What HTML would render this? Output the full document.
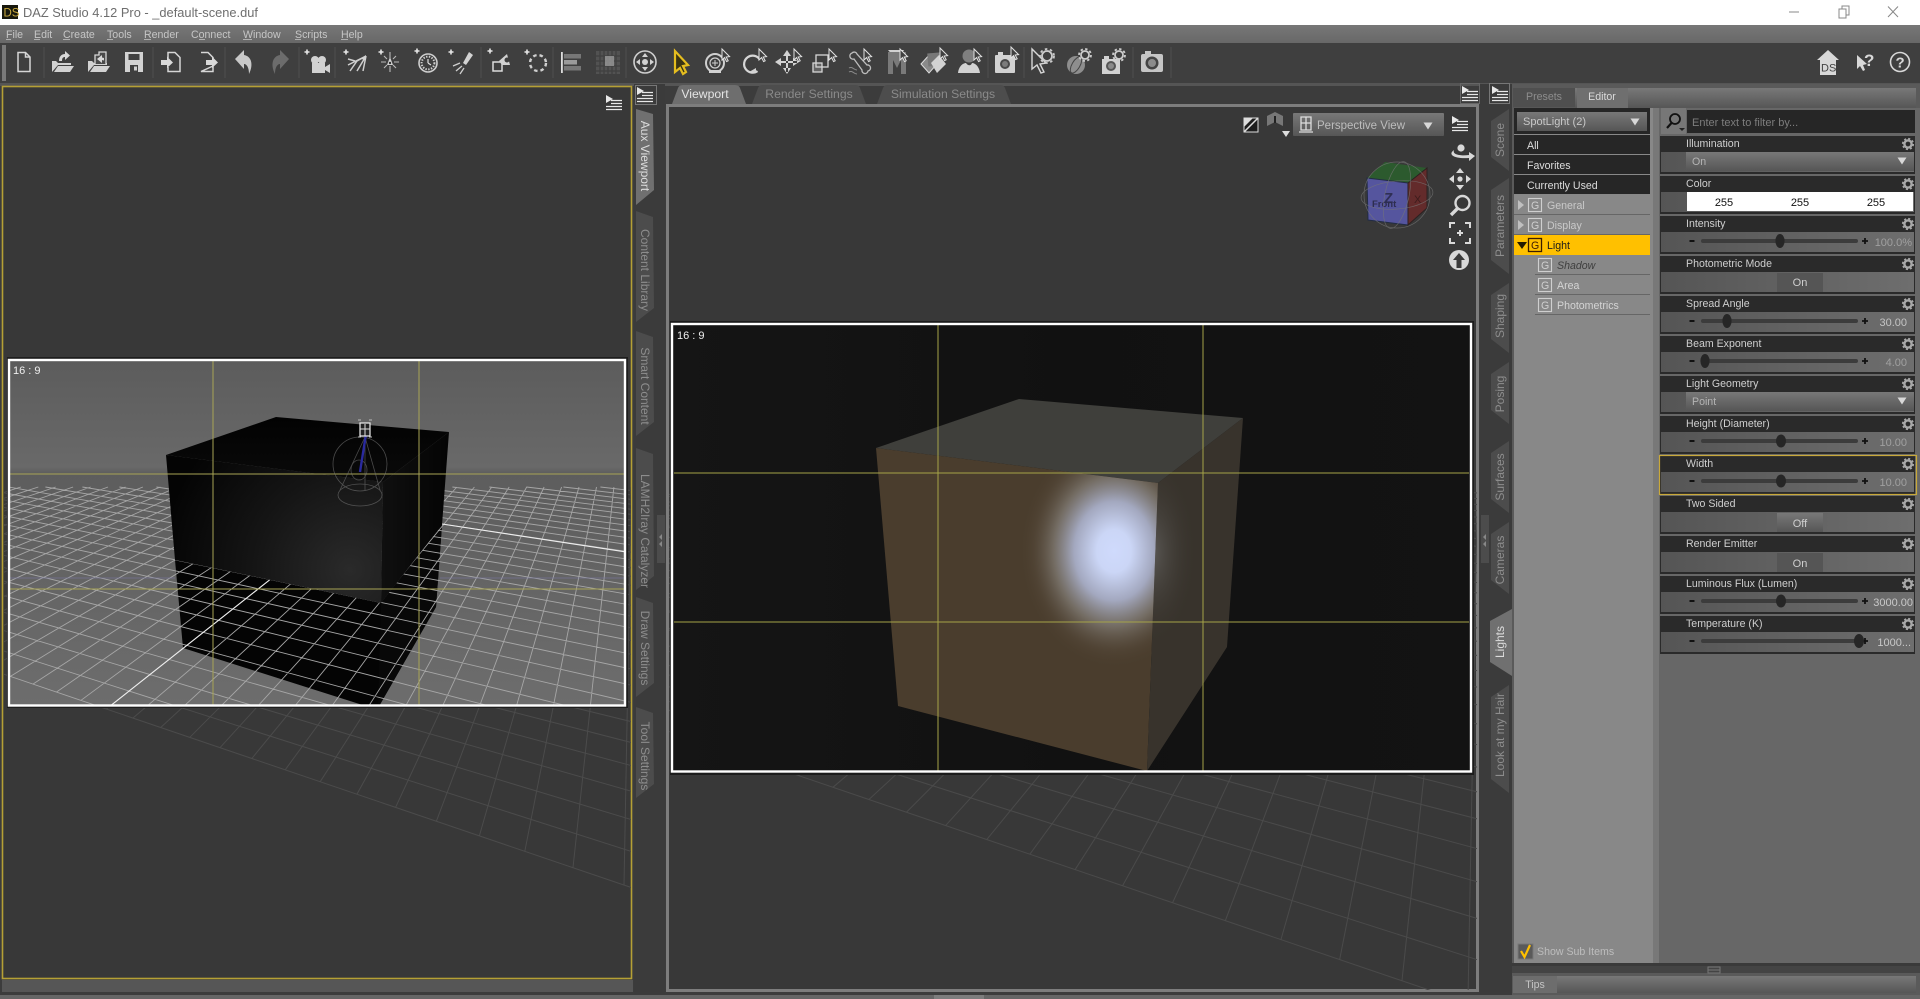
<!DOCTYPE html>
<html><head><meta charset="utf-8"><title>DAZ Studio</title>
<style>
html,body{margin:0;padding:0;background:#3c3c3c;overflow:hidden}
svg{display:block;font-family:"Liberation Sans",sans-serif}
text{font-size:10.6px;fill:#c6c6c6}
.ic{fill:#d2d2d2}
.st{fill:none;stroke:#d6d6d6;stroke-width:1.5}
.sep{stroke:#4f4f4f;stroke-width:1}
.t{fill:#cfcfcf}
.v{font-size:11px;text-anchor:end}
.tb{font-size:12.2px;fill:#8a8a8a;text-anchor:middle}
.vt{font-size:12px;fill:#8d8d8d;text-anchor:middle}
</style></head><body>
<svg width="1920" height="999" viewBox="0 0 1920 999" xmlns="http://www.w3.org/2000/svg">
<defs>
<linearGradient id="menu" x1="0" y1="0" x2="0" y2="1"><stop offset="0" stop-color="#777"/><stop offset="1" stop-color="#686868"/></linearGradient>
<linearGradient id="sel" x1="0" y1="0" x2="0" y2="1"><stop offset="0" stop-color="#787878"/><stop offset="1" stop-color="#565656"/></linearGradient>
<linearGradient id="body" x1="0" y1="0" x2="1" y2="0"><stop offset="0" stop-color="#555"/><stop offset="1" stop-color="#6e6e6e"/></linearGradient>
<linearGradient id="sky" x1="0" y1="0" x2="0" y2="1"><stop offset="0" stop-color="#5c5c5c"/><stop offset=".31" stop-color="#696969"/><stop offset=".33" stop-color="#5d5d5d"/><stop offset="1" stop-color="#6d6d6d"/></linearGradient>
<radialGradient id="lface" cx="350" cy="570" r="190" gradientUnits="userSpaceOnUse"><stop offset="0" stop-color="#2a2a2a"/><stop offset=".5" stop-color="#151515"/><stop offset="1" stop-color="#040404"/></radialGradient>
<linearGradient id="rface" x1="383" y1="0" x2="449" y2="0" gradientUnits="userSpaceOnUse"><stop offset="0" stop-color="#0f0f0f"/><stop offset="1" stop-color="#040404"/></linearGradient>
<linearGradient id="tface" x1="0" y1="417" x2="0" y2="482" gradientUnits="userSpaceOnUse"><stop offset="0" stop-color="#020202"/><stop offset="1" stop-color="#0a0a0a"/></linearGradient>
<linearGradient id="dark" x1="0" y1="0" x2="1" y2="0"><stop offset="0" stop-color="#151515"/><stop offset=".5" stop-color="#111"/><stop offset="1" stop-color="#131313"/></linearGradient>
<radialGradient id="glow"><stop offset="0" stop-color="#cfdafc"/><stop offset=".18" stop-color="#cbd6f6"/><stop offset=".42" stop-color="#a3a8bf"/><stop offset=".64" stop-color="#7d776f" stop-opacity=".8"/><stop offset=".85" stop-color="#5a4e40" stop-opacity=".35"/><stop offset="1" stop-color="#4a3d2d" stop-opacity="0"/></radialGradient>
<radialGradient id="glow2"><stop offset="0" stop-color="#777" stop-opacity=".55"/><stop offset="1" stop-color="#38332c" stop-opacity="0"/></radialGradient>
<clipPath id="cL"><rect x="4" y="88" width="627" height="890"/></clipPath>
<clipPath id="cM"><rect x="669" y="106" width="808" height="884"/></clipPath>
<clipPath id="cB"><rect x="9" y="360" width="616" height="345"/></clipPath>
<clipPath id="cC"><rect x="673" y="324" width="797" height="447"/></clipPath>
<clipPath id="cF"><polygon points="876,448 1158,483 1147,771 898,706"/></clipPath>
<clipPath id="cR"><polygon points="1158,483 1243,418 1227,647 1147,771"/></clipPath>
<g id="gear"><circle r="3.6" fill="none" stroke="#a8a8a8" stroke-width="2.4"/><circle r="5.3" fill="none" stroke="#a8a8a8" stroke-width="1.6" stroke-dasharray="2.1 2.06"/></g>
<g id="men"><path d="M-8,-8 L-1,-4 L-8,0 Z" fill="#e8e8e8"/><path d="M-3,-2.5H8M-3,.5H8M-8,3.5H8M-8,6.5H8" stroke="#e8e8e8" stroke-width="1.2"/></g>
<path id="cur" d="M0,0 L0,11 L2.6,8.6 L4.6,12.6 L6.2,11.8 L4.2,8 L7.6,7.6 Z" fill="#3f3f3f" stroke="#e2e2e2" stroke-width="1"/>
<g id="plus"><path d="M-2.5,0H2.5M0,-2.5V2.5" stroke="#e6e6e6" stroke-width="1.6"/></g>
<g id="sl"><path d="M1689.5,0H1694.5" stroke="#111" stroke-width="2"/><rect x="1701" y="-2" width="157" height="4" rx="2" fill="#3c3c3c"/><path d="M1862,0H1868M1865,-3V3" stroke="#111" stroke-width="1.8"/></g>
<polygon id="dn" points="-4.5,-3.5 4.5,-3.5 0,3.5" fill="#d8d8d8"/>
<path id="grid" fill="none" d="M-546.6,487L700,910.9M-509.6,487L700,873.4M-472.6,487L700,840.3M-435.6,487L700,810.8M-398.6,487L700,784.2M-361.6,487L700,760.2M-324.6,487L700,738.5M-287.6,487L700,718.6M-250.6,487L700,700.6M-213.6,487L700,683.9M-176.6,487L700,668.5M-139.6,487L700,654.3M-102.6,487L700,641.1M-65.6,487L700,628.9M-28.6,487L700,617.5M8.4,487L700,606.8M45.4,487L700,596.8M82.4,487L700,587.4M119.4,487L700,578.6M156.4,487L700,570.3M193.4,487L700,562.4M230.4,487L700,555M267.4,487L700,547.9M304.4,487L700,541.3M341.4,487L700,535M378.4,487L700,529M415.4,487L700,523.2M452.4,487L700,517.8M489.4,487L700,512.6M526.4,487L700,507.6M563.4,487L700,502.9M600.4,487L700,498.3M637.4,487L700,493.9
M3.4,487L-284,576.2M20.8,487L-271.9,580.4M38.3,487L-259.2,584.7M55.7,487L-246.1,589.1M73.1,487L-232.7,593.7M90.6,487L-218.8,598.4M108,487L-204.6,603.3M125.5,487L-189.9,608.3M142.9,487L-174.6,613.5M160.4,487L-158.8,618.8M177.8,487L-142.5,624.3M195.3,487L-125.8,630.1M212.7,487L-108.3,636M230.1,487L-90.2,642.1M247.6,487L-71.6,648.5M265,487L-52.1,655M282.5,487L-32.1,661.9M299.9,487L-11.2,669M317.4,487L10.4,676.4M334.8,487L33.1,684M352.3,487L56.5,692M369.7,487L81,700.3M387.1,487L106.4,709M404.6,487L133,718M422,487L160.7,727.5M439.5,487L189.8,737.3M456.9,487L220.1,747.6M474.4,487L251.9,758.4M491.8,487L285.2,769.8M509.2,487L320.2,781.7M526.7,487L356.9,794.2M544.1,487L395.6,807.3M561.6,487L436.4,821.2M579,487L479.4,835.8M596.5,487L524.8,851.3M613.9,487L573,867.6M631.4,487L624,885"/>
</defs>

<!-- base -->
<rect width="1920" height="999" fill="#3c3c3c"/>
<!-- title bar -->
<rect width="1920" height="25" fill="#fff"/>
<rect x="2" y="5" width="16" height="14" fill="#17170c"/>
<text x="3.5" y="16.5" style="font-size:11.5px;fill:#c9a93e">DS</text>
<text x="23" y="17" textLength="235" lengthAdjust="spacingAndGlyphs" style="font-size:13px;fill:#6e6e6e">DAZ Studio 4.12 Pro - _default-scene.duf</text>
<path d="M1789,12H1799" stroke="#888" stroke-width="1"/>
<path d="M1839,9h7v9h-7zM1842,9V6h7v9h-3" fill="none" stroke="#888"/>
<path d="M1888,6.5L1898,17M1898,6.5L1888,17" stroke="#888"/>
<!-- menu -->
<rect y="25" width="1920" height="18" fill="url(#menu)"/>
<text x="6" y="38">File</text><text x="34" y="38">Edit</text><text x="63" y="38">Create</text><text x="107" y="38">Tools</text><text x="144" y="38">Render</text><text x="191" y="38">Connect</text><text x="243" y="38">Window</text><text x="295" y="38">Scripts</text><text x="341" y="38">Help</text>
<path d="M6,39.5h5M34,39.5h6M63,39.5h7M107,39.5h6M144,39.5h7M199,39.5h6M243,39.5h9M295,39.5h6M341,39.5h7" stroke="#c6c6c6" stroke-width=".8"/>
<!-- toolbar -->
<rect y="43" width="1920" height="40" fill="#3f3f3f"/>
<rect y="83" width="1920" height="3" fill="#555"/>
<rect x="2" y="45" width="4" height="36" fill="#7a7a7a"/>
<path class="sep" d="M44,47V78M153,47V78M225,47V78M299,47V78M335,47V78M481,47V78M553,47V78M626,47V78M988,47V78M1024,47V78M1133,47V78M1171,47V78"/>
<!-- new -->
<g transform="translate(24,62)"><path class="st" d="M-6,-9.5H1.5L6,-5V9.5H-6Z"/><path class="st" d="M1.5,-9.5V-5H6" stroke-width="1"/></g>
<!-- open -->
<g transform="translate(62,62)"><path class="ic" d="M-10,10 V-1 H-6 L-4,1 H9 V3 H-4 Z M-8,10 L-4,4 H12 L8,10 Z"/><path d="M-3,-1 C-3,-6 0,-8 3,-8 L3,-11 L8,-6.5 L3,-2 L3,-5 C1,-5 0,-4 -0,-1 Z" fill="#d8d8d8"/></g>
<!-- merge -->
<g transform="translate(98,62)"><path class="ic" d="M-10,10 V-1 H-6 L-4,1 H9 V3 H-4 Z M-8,10 L-4,4 H12 L8,10 Z"/><path d="M-3,2V-7H1V-10H8V2" fill="#4a4a4a" stroke="#d8d8d8" stroke-width="1.3"/><path d="M-1,-3L4,-7V-4.5L6,-4V-1.5L4,-2V1Z" fill="#d8d8d8"/></g>
<!-- save -->
<g transform="translate(134,62)"><path class="ic" d="M-9,-10 H9 V10 H-9 Z"/><rect x="-5.5" y="-8" width="11" height="6" fill="#3f3f3f"/><rect x="-4" y="3" width="8" height="7" fill="#3f3f3f"/><rect x="0" y="4.5" width="3" height="4" fill="#cfcfcf"/></g>
<!-- import -->
<g transform="translate(171,62)"><path class="st" d="M-3,-4V-9.5H4L9,-4.5V9.5H-3V5"/><path d="M-10,-2H-4V-5.5L2,0.5L-4,6V3H-10Z" fill="#d8d8d8"/></g>
<!-- export -->
<g transform="translate(208,62)"><path class="st" d="M-7,-9.5H0L5,-4.5V-2M5,4V9.5H-7Z"/><path d="M-2,-2H4V-5.5L10,0.5L4,6V3H-2Z" fill="#d8d8d8"/></g>
<!-- undo / redo -->
<path transform="translate(244,62)" fill="#c8c8c8" d="M-9,-3 L0,-12 L0,-7 C7,-6 10,2 5,12 C5,6 3,2 0,2 L0,7 Z"/>
<path transform="translate(280,62) scale(-1,1)" fill="#6c6c6c" d="M-9,-3 L0,-12 L0,-7 C7,-6 10,2 5,12 C5,6 3,2 0,2 L0,7 Z"/>
<!-- create camera -->
<g transform="translate(318,62)"><use href="#plus" x="-9" y="-9" transform="translate(-2,-1)"/><circle cx="-3" cy="-2" r="4" class="ic"/><circle cx="4" cy="-2" r="4" class="ic"/><rect x="-6" y="1" width="13" height="10" class="ic"/><path class="ic" d="M7,5L12,2V11L7,8Z"/></g>
<!-- distant -->
<g transform="translate(355,62)"><use href="#plus" x="-9" y="-10"/><path d="M-7,-3L0,-1M11,-6L2,-1L-5,9M11,-6L8,9M11,-6L2,9M11,-6 L-7,3" stroke="#cfcfcf" stroke-width="1.5" fill="none"/><path class="ic" d="M11,-7V-2L6,-3Z"/></g>
<!-- point light -->
<g transform="translate(390,62)"><use href="#plus" x="-9" y="-10"/><path d="M0,-10V-4M0,4V10M-9,0H-4M4,0H9M-6,-6L-3,-3M3,3L6,6M6,-6L3,-3M-3,3L-6,6" stroke="#b8b8b8" stroke-width="1.1"/><path d="M0,-5L3,3H-3Z" class="ic"/><circle r="1.2" cy="1" fill="#333"/></g>
<!-- clock -->
<g transform="translate(427,62)"><use href="#plus" x="-10" y="-11"/><circle cx="1" cy="1" r="9" fill="none" stroke="#cfcfcf" stroke-width="1.6"/><circle cx="1" cy="1" r="6.4" fill="none" stroke="#cfcfcf" stroke-width="2" stroke-dasharray="1.4 1.4"/><path d="M1,1V-3M1,1L4,3" stroke="#e0e0e0" stroke-width="1.2"/></g>
<!-- spotlight -->
<g transform="translate(461,62)"><use href="#plus" x="-10" y="-10"/><path class="ic" d="M2,1 L8,-10 L12,-7 L5,3 Z"/><path d="M1,4L-5,9M3,6L-1,12M-1,1L-8,4" stroke="#cfcfcf" stroke-width="1.3"/></g>
<!-- null/primitive -->
<g transform="translate(500,62)"><use href="#plus" x="-10" y="-11"/><rect x="-7" y="0" width="9" height="9" fill="#3f3f3f" stroke="#dcdcdc" stroke-width="1.5"/><path class="ic" d="M-1,-1 L7,-8 L10,3 L2,3Z"/><circle cx="7" cy="-2" r="2.5" fill="#3f3f3f"/></g>
<!-- ring -->
<g transform="translate(537,62)"><use href="#plus" x="-10" y="-10"/><circle cx="1" cy="1" r="8" fill="none" stroke="#cfcfcf" stroke-width="2.4" stroke-dasharray="3.5 3"/></g>
<!-- align bars -->
<g transform="translate(571,62)"><rect x="-10" y="-10" width="1.8" height="21" fill="#ddd"/><rect x="-7" y="-8" width="17" height="4.5" fill="#777"/><rect x="-7" y="-2" width="13" height="4.5" fill="#9a9a9a"/><rect x="-7" y="4" width="17" height="4.5" fill="#777"/></g>
<!-- grid dim -->
<g transform="translate(608,62)"><rect x="-12" y="-11" width="24" height="23" fill="#5a5a5a" opacity=".75"/><path d="M-12,-6H12M-12,-1H12M-12,4H12M-12,9H12M-8,-11V12M-4,-11V12M0,-11V12M4,-11V12M8,-11V12" stroke="#3f3f3f" stroke-width="1.2"/><rect x="-3" y="-6" width="9" height="10" fill="#9a9a9a" opacity=".8"/></g>
<!-- universal -->
<g transform="translate(645,62)"><circle r="11" fill="none" stroke="#cfcfcf" stroke-width="1.6"/><path class="ic" d="M0,-9L3,-5H-3ZM0,9L3,5H-3ZM-9,0L-5,3V-3ZM9,0L5,3V-3Z"/><circle r="3" class="ic"/></g>
<!-- node select yellow -->
<g transform="translate(681,62)"><path d="M-6,-11 V10 L-1,6 L2,12 L5,10 L2,4 L7,3 Z" fill="#3a3414" stroke="#e5bd1f" stroke-width="2.2"/></g>
<!-- orbit with cursor -->
<g transform="translate(715,62)"><circle cy="1" r="9" fill="none" stroke="#d0d0d0" stroke-width="2"/><circle cy="1" r="5" fill="none" stroke="#d0d0d0" stroke-width="1.2"/><path d="M-3,1H3M0,-2V4" stroke="#d0d0d0"/><path class="ic" d="M-6,8H6V11H-6Z"/><use href="#cur" x="7" y="-13"/></g>
<g transform="translate(752,62)"><path d="M7,8A8.5,8.5,0,1,1,7,-4" fill="none" stroke="#d6d6d6" stroke-width="2.2" transform="rotate(10)"/><path class="ic" d="M-3,10H4V6Z"/><use href="#cur" x="7" y="-13"/></g>
<g transform="translate(787,62)"><path class="ic" d="M-1,-10V10H1V-10ZM-10,-1H10V1H-10ZM0,-12L-4,-6H4ZM0,12L-4,6H4ZM-12,0L-6,-4V4ZM12,0L6,-4V4Z"/><use href="#cur" x="7" y="-13"/></g>
<g transform="translate(822,62)"><rect x="-9" y="-2" width="12" height="12" fill="none" stroke="#d6d6d6" stroke-width="1.3" transform="translate(3,-5)"/><rect x="-9" y="1" width="9" height="9" fill="#cfcfcf" fill-opacity=".25" stroke="#d6d6d6" stroke-width="1.3"/><use href="#cur" x="7" y="-13"/></g>
<g transform="translate(860,62)"><path d="M-8,-9a3,3,0,0,1,5,1L7,3a3,3,0,0,1,1,6,3,3,0,0,1,-6,-1L-6,-3a3,3,0,0,1,-2,-6Z" fill="none" stroke="#bdbdbd" stroke-width="1.3" /><path d="M-11,6c3,-2 5,2 8,2M-11,10c3,-2 5,2 8,2" stroke="#8a8a8a" fill="none"/><use href="#cur" x="4" y="-13"/></g>
<g transform="translate(897,62)"><path class="ic" d="M-9,-12H7L0,-2Z" fill="#dcdcdc"/><path d="M-9,-10V12H-4V-2L0,6L4,-2V12H9V-10" fill="#7a7a7a"/><use href="#cur" x="3" y="-13"/></g>
<g transform="translate(934,62)"><path d="M-13,2L-4,-8L3,2L-5,11Z" fill="#8a8a8a" stroke="#ddd"/><rect x="-6" y="-9" width="13" height="13" fill="#777" transform="rotate(-5)"/><path class="ic" d="M-3,1L5,-7L12,2L3,11Z"/><use href="#cur" x="6" y="-14"/></g>
<g transform="translate(969,62)"><circle cy="-6" r="6.5" fill="#7f7f7f"/><path class="ic" d="M-11,11C-10,3 -5,1 -3,1C-1,4 2,4 3,1C6,1 10,4 11,11Z" fill="#b5b5b5"/><use href="#cur" x="5" y="-13"/></g>
<g transform="translate(1005,62)"><rect x="-10" y="-7" width="20" height="18" rx="1" class="ic"/><rect x="-7" y="-10" width="5" height="3" class="ic"/><circle cy="2" r="5" fill="#4a4a4a"/><circle cy="2" r="3" fill="#7c7c7c"/><use href="#cur" x="6" y="-15"/></g>
<g transform="translate(1042,62)"><path d="M-10,-13V7L-5,3L-1,11L2,10L-2,2L4,1Z" fill="#3f3f3f" stroke="#d6d6d6" stroke-width="1.4"/><circle cx="5" cy="-6" r="5" fill="none" stroke="#ccc" stroke-width="1.8"/><circle cx="5" cy="-6" r="7" fill="none" stroke="#ccc" stroke-width="1.8" stroke-dasharray="2.5 2.6"/></g>
<g transform="translate(1079,62)"><circle cx="-3" cy="3" r="9" fill="#8e8e8e"/><ellipse cx="-3" cy="3" rx="4" ry="9" fill="none" stroke="#444" transform="rotate(30 -3 3)"/><circle cx="6" cy="-7" r="4" fill="#3f3f3f" stroke="#ccc" stroke-width="1.8"/><circle cx="6" cy="-7" r="6" fill="none" stroke="#ccc" stroke-width="1.8" stroke-dasharray="2.4 2.3"/></g>
<g transform="translate(1113,62)"><rect x="-11" y="-3" width="18" height="15" class="ic"/><circle cx="-2" cy="4" r="5" fill="#555"/><circle cx="-2" cy="4" r="3" fill="#8a8a8a"/><rect x="-9" y="-6" width="5" height="3" class="ic"/><circle cx="6" cy="-7" r="4" fill="#3f3f3f" stroke="#ccc" stroke-width="1.8"/><circle cx="6" cy="-7" r="6" fill="none" stroke="#ccc" stroke-width="1.8" stroke-dasharray="2.4 2.3"/></g>
<g transform="translate(1152,62)"><rect x="-11" y="-8" width="22" height="18" rx="2" fill="#c6c6c6"/><rect x="-7" y="-11" width="6" height="3" fill="#c6c6c6"/><circle cy="1" r="6.5" fill="#444"/><circle cy="1" r="4" fill="#8c8c8c"/></g>
<!-- right toolbar -->
<g transform="translate(1828,62)"><path fill="#d8d8d8" d="M0,-12L11,-2H8V13H-8V-2H-11Z"/><text x="-7" y="9.5" style="font-size:11px;fill:#444">DS</text></g>
<g transform="translate(1864,62)"><path d="M-7,-7V7L-4,4L-1,9L1,8L-1,3L3,2Z" fill="#d8d8d8"/><text x="0" y="4" style="font-size:17px;font-weight:bold;fill:#d8d8d8">?</text></g>
<g transform="translate(1900,62)"><circle r="9.5" fill="none" stroke="#d8d8d8" stroke-width="1.6"/><text x="-4.5" y="5.5" style="font-size:15px;font-weight:bold;fill:#d8d8d8">?</text></g>

<!-- LEFT VIEWPORT -->
<rect x="2.5" y="86.5" width="629" height="892" fill="#383838" stroke="#b5a035" stroke-width="1.6"/>
<g clip-path="url(#cL)"><use href="#grid" stroke="#4b4b4b" stroke-width="1"/></g>
<rect x="2" y="980" width="631" height="12" fill="#565656"/>
<use href="#men" x="614" y="103"/>
<!-- box -->
<rect x="7" y="357" width="621" height="351" fill="#1e1e1e"/>
<g clip-path="url(#cB)">
<rect x="9" y="360" width="616" height="345" fill="url(#sky)"/>
<!-- cube lower -->
<polygon points="175,560 183,648 372,708 378,708 436,607 442,525 381,603" fill="#040404"/>
<polygon points="381,603 442,525 436,607 378,708" fill="#080808"/>
<use href="#grid" stroke="#a6a6a6" stroke-width=".9"/>
<path d="M106.4,709L269.5,580" stroke="#eee" stroke-width="1.1"/>
<path d="M442,524L626,552" stroke="#eee" stroke-width="1.1"/>
<path d="M10,578H175M440,578H625" stroke="#7a78a8" stroke-width=".8" opacity=".7"/>
<!-- upper cube -->
<polygon points="166,455 383,482 381,603 175,560" fill="url(#lface)"/>
<polygon points="383,482 449,432 442,525 381,603" fill="url(#rface)"/>
<polygon points="166,455 276,417 449,432 383,482" fill="url(#tface)"/>
<!-- guides -->
<path d="M213,360V705M419,360V705M10,474H624M10,589H624" stroke="#a8a455" stroke-width="1"/>
<!-- light gizmo -->
<g fill="none" stroke="#777" stroke-width=".8" opacity=".6"><circle cx="360" cy="464" r="27"/><ellipse cx="360" cy="495" rx="22" ry="11"/><ellipse cx="359" cy="470" rx="8" ry="10"/><path d="M365,437L340,490M365,437L380,490M365,437V490"/></g>
<path d="M366,434L360,472" stroke="#2a2a9e" stroke-width="2.4"/>
<rect x="360" y="423" width="10" height="13" fill="#222" stroke="#eee" stroke-width="1.2"/>
<path d="M360,429H370M365,424V436" stroke="#ddd"/>
<path d="M358,420h3M369,420h3M358,437h3M369,437h3" stroke="#bbb"/>
</g>
<rect x="9" y="360" width="616" height="345.5" fill="none" stroke="#fff" stroke-width="2.4"/>
<text x="13" y="374" style="font-size:11px;fill:#eee">16 : 9</text>

<!-- left side strip -->
<rect x="634" y="84" width="31" height="910" fill="#3b3b3b"/>
<rect x="635.5" y="85.5" width="21" height="19" fill="none" stroke="#777"/>
<use href="#men" x="645" y="95"/>
<rect x="657" y="515" width="8" height="48" fill="#4c4c4c"/>
<path d="M659,537l3,-3v6zM659,544l3,-3v6z" fill="#888"/>
<polygon points="636,109 653,114 654,190 636,205" fill="#707070"/>
<polygon points="636,211 653,217 654,308 636,322" fill="#4c4c4c"/>
<polygon points="636,331 653,337 654,422 636,436" fill="#4c4c4c"/>
<polygon points="636,448 653,454 654,576 636,590" fill="#4c4c4c"/>
<polygon points="636,597 653,603 654,683 636,697" fill="#4c4c4c"/>
<polygon points="636,707 653,713 654,784 636,798" fill="#4c4c4c"/>
<text class="vt" transform="translate(641,156) rotate(90)" style="fill:#dcdcdc">Aux Viewport</text>
<text class="vt" transform="translate(641,270) rotate(90)">Content Library</text>
<text class="vt" transform="translate(641,386) rotate(90)">Smart Content</text>
<text class="vt" transform="translate(641,531) rotate(90)">LAMH2Iray Catalyzer</text>
<text class="vt" transform="translate(641,648) rotate(90)">Draw Settings</text>
<text class="vt" transform="translate(641,756) rotate(90)">Tool Settings</text>

<!-- MAIN PANEL -->
<path d="M672,104 L678,88 Q679,85 683,85 H735 Q739,85 740,88 L746,104Z" fill="#6e6e6e"/>
<path d="M752,104 L758,88 Q759,85 763,85 H855 Q859,85 860,88 L866,104Z" fill="#4d4d4d"/>
<path d="M877,104 L883,88 Q884,85 888,85 H1000 Q1004,85 1005,88 L1011,104Z" fill="#4d4d4d"/>
<text class="tb" x="705" y="98" style="fill:#e4e4e4">Viewport</text>
<text class="tb" x="809" y="98">Render Settings</text>
<text class="tb" x="943" y="98">Simulation Settings</text>
<rect x="1460.5" y="83.5" width="19" height="20" fill="none" stroke="#666"/>
<use href="#men" x="1470" y="94"/>
<rect x="667.5" y="105.5" width="810" height="885" fill="#383838" stroke="#7d7d7d" stroke-width="3"/>
<g clip-path="url(#cM)"><g transform="matrix(1.293 0 0 1.293 661.1 -141.2)"><use href="#grid" stroke="#4a4a4a" stroke-width=".8"/></g></g>
<!-- render box -->
<rect x="670" y="321" width="804" height="454" fill="#1c1c1c"/>
<g clip-path="url(#cC)">
<rect x="673" y="324" width="797" height="447" fill="url(#dark)"/>
<polygon points="876,448 1019,399 1243,418 1158,483" fill="#3f3f3b"/>
<polygon points="876,448 1158,483 1147,771 898,706" fill="#4a3d2d"/>
<polygon points="1158,483 1243,418 1227,647 1147,771" fill="#38332c"/>
<g clip-path="url(#cF)"><ellipse cx="1114" cy="551" rx="95" ry="118" fill="url(#glow)"/></g>
<g clip-path="url(#cR)"><ellipse cx="1152" cy="552" rx="45" ry="95" fill="url(#glow2)"/></g>
<path d="M938,324V771M1203,324V771M674,473H1469M674,622H1469" stroke="#a5a348" stroke-width="1"/>
</g>
<rect x="672" y="324" width="799" height="447.5" fill="none" stroke="#fff" stroke-width="2.4"/>
<text x="677" y="339" style="font-size:11px;fill:#eee">16 : 9</text>
<!-- viewport controls -->
<g transform="translate(1251,125)"><rect x="-7" y="-7" width="14" height="14" fill="#1e1e1e" stroke="#ddd"/><path d="M-7,7L7,-7" stroke="#ddd" stroke-width="1.5"/><path d="M-7,-7H2L-7,2Z" fill="#ddd"/></g>
<g transform="translate(1275,120)"><path d="M-8,-4L0,-8L8,-4V6L0,2L-8,6Z" fill="#777"/><path d="M0,-4V3" stroke="#222" stroke-width="2"/></g>
<polygon points="1282,131 1290,131 1286,137" fill="#ddd"/>
<rect x="1293" y="113" width="151" height="23" rx="1" fill="url(#sel)"/>
<path d="M1301,117h10v13h-10zM1306,117v13M1301,123h10M1299,132h14" fill="none" stroke="#ddd" stroke-width="1.3"/>
<text x="1317" y="129" style="font-size:11.5px;fill:#bdbdbd">Perspective View</text>
<use href="#dn" x="1428" y="126"/>
<use href="#men" x="1460" y="124"/>
<g fill="#d8d8d8">
<g transform="translate(1461,153)"><circle cy="-5" r="3.6"/><path d="M-7,-3C-14,2 -6,6 8,5L8,8L14,3L8,-1L8,2C0,3 -9,2 -7,-3Z"/></g>
<g transform="translate(1460,179)"><circle r="2.6"/><path d="M0,-11L4,-6H-4ZM0,11L4,6H-4ZM-11,0L-6,-4V4ZM11,0L6,-4V4Z"/></g>
<g transform="translate(1460,206)"><circle cx="2.5" cy="-3" r="7" fill="none" stroke="#d8d8d8" stroke-width="2.4"/><path d="M-2,2L-9,9" stroke="#d8d8d8" stroke-width="3.4"/></g>
<g transform="translate(1460,233)" fill="none" stroke="#d8d8d8" stroke-width="2"><path d="M-10,-5V-10H-5M5,-10H10V-5M10,5V10H5M-5,10H-10V5M-3,0H3M0,-3V3"/></g>
<g transform="translate(1459,260)"><circle r="10"/><path d="M0,-7L6,0H2.5V8H-2.5V0H-6Z" fill="#3a3a3a"/></g>
</g>
<!-- nav cube -->
<polygon points="1367,178 1385,162 1427,168 1408,183" fill="#2c5a2e"/>
<polygon points="1367,178 1408,183 1408,225 1368,220" fill="#55559e" stroke="#222c44"/>
<polygon points="1408,183 1427,168 1427,208 1408,225" fill="#632b2b" stroke="#2c2020"/>
<text x="1384" y="203" style="font-size:15px;font-weight:bold;fill:#2f2f55">Z</text>
<text x="1372" y="207" style="font-size:9.5px;font-weight:bold;fill:#2d2d4f">Front</text>
<text x="1414" y="203" style="font-size:11px;fill:#3d1c1c">X</text>
<g fill="none" stroke="#777" stroke-width=".7" opacity=".7"><circle cx="1397" cy="195" r="33"/><ellipse cx="1397" cy="195" rx="36" ry="14" transform="rotate(-5 1397 195)"/><ellipse cx="1397" cy="195" rx="12" ry="34" transform="rotate(12 1397 195)"/></g>

<!-- RIGHT TABS -->
<rect x="1480" y="84" width="32" height="910" fill="#3b3b3b"/>
<rect x="1489.5" y="83.5" width="20" height="20" fill="none" stroke="#777"/>
<use href="#men" x="1500" y="94"/>
<rect x="1481" y="515" width="8" height="48" fill="#4c4c4c"/>
<path d="M1483,537l3,-3v6zM1483,544l3,-3v6z" fill="#888"/>
<polygon points="1509,109 1491,121 1491,157 1509,171" fill="#4c4c4c"/>
<polygon points="1509,178 1491,190 1491,260 1509,274" fill="#4c4c4c"/>
<polygon points="1509,283 1491,295 1491,339 1509,353" fill="#4c4c4c"/>
<polygon points="1509,362 1491,374 1491,410 1509,424" fill="#4c4c4c"/>
<polygon points="1509,441 1491,453 1491,499 1509,513" fill="#4c4c4c"/>
<polygon points="1509,522 1491,534 1491,580 1509,594" fill="#4c4c4c"/>
<polygon points="1512,609 1490,621 1490,662 1512,676" fill="#707070"/>
<polygon points="1509,685 1491,697 1491,779 1509,793" fill="#4c4c4c"/>
<text class="vt" transform="translate(1504,140) rotate(-90)">Scene</text>
<text class="vt" transform="translate(1504,226) rotate(-90)">Parameters</text>
<text class="vt" transform="translate(1504,316) rotate(-90)">Shaping</text>
<text class="vt" transform="translate(1504,394) rotate(-90)">Posing</text>
<text class="vt" transform="translate(1504,477) rotate(-90)">Surfaces</text>
<text class="vt" transform="translate(1504,560) rotate(-90)">Cameras</text>
<text class="vt" transform="translate(1504,642) rotate(-90)" style="fill:#dcdcdc">Lights</text>
<text class="vt" transform="translate(1504,735) rotate(-90)">Look at my Hair</text>

<!-- RIGHT PANEL -->
<rect x="1512" y="84" width="408" height="911" fill="#5a5a5a"/>
<rect x="1513" y="88" width="403" height="20" fill="url(#sel)"/>
<rect x="1513" y="88" width="62" height="19" fill="#4f4f4f"/>
<rect x="1577" y="88" width="51" height="20" fill="#6f6f6f"/>
<text class="tb" x="1544" y="100" style="font-size:10.6px;fill:#8d8d8d">Presets</text>
<text class="tb" x="1602" y="100" style="font-size:10.6px;fill:#dadada">Editor</text>
<!-- list -->
<rect x="1514" y="108" width="139" height="855" fill="#888"/>
<rect x="1653" y="108" width="6" height="855" fill="#787878"/>
<rect x="1514" y="108" width="136" height="26" fill="#262626"/>
<rect x="1517" y="112" width="130" height="19" fill="url(#sel)"/>
<text x="1523" y="125" style="font-size:11px;fill:#c8c8c8">SpotLight (2)</text>
<use href="#dn" x="1635" y="122"/>
<rect x="1514" y="135" width="136" height="19" fill="#262626"/><text x="1527" y="149" style="fill:#ddd">All</text>
<rect x="1514" y="155" width="136" height="19" fill="#262626"/><text x="1527" y="169" style="fill:#ddd">Favorites</text>
<rect x="1514" y="175" width="136" height="19" fill="#262626"/><text x="1527" y="189" style="fill:#ddd">Currently Used</text>
<path d="M1514,214.5H1650M1514,234.5H1650M1535,274.5H1650M1535,294.5H1650M1535,314.5H1650" stroke="#666"/>
<rect x="1514" y="235" width="136" height="20" fill="#ffc000"/>
<polygon points="1518,200 1518,210 1524,205" fill="#c0c0c0"/>
<polygon points="1518,220 1518,230 1524,225" fill="#c0c0c0"/>
<polygon points="1517,242 1527,242 1522,249" fill="#241a00"/>
<g fill="none" stroke="#cfcfcf" stroke-width="1.1"><rect x="1528.5" y="198.5" width="13" height="13"/><rect x="1528.5" y="218.5" width="13" height="13"/><rect x="1538.5" y="258.5" width="13" height="13"/><rect x="1538.5" y="278.5" width="13" height="13"/><rect x="1538.5" y="298.5" width="13" height="13"/></g>
<rect x="1528.5" y="238.5" width="13" height="13" fill="none" stroke="#3c1c00" stroke-width="1.3"/>
<g style="font-size:10.6px"><text x="1531" y="209" style="fill:#cfcfcf">G</text><text x="1531" y="229" style="fill:#cfcfcf">G</text><text x="1531" y="249" style="fill:#3c1c00">G</text><text x="1541" y="269" style="fill:#cfcfcf">G</text><text x="1541" y="289" style="fill:#cfcfcf">G</text><text x="1541" y="309" style="fill:#cfcfcf">G</text></g>
<text x="1547" y="209" style="fill:#c9c9c9">General</text>
<text x="1547" y="229" style="fill:#c9c9c9">Display</text>
<text x="1547" y="249" style="fill:#1a1a1a">Light</text>
<text x="1557" y="269" style="fill:#3e3e3e;font-style:italic">Shadow</text>
<text x="1557" y="289" style="fill:#d4d4d4">Area</text>
<text x="1557" y="309" style="fill:#d4d4d4">Photometrics</text>
<!-- show sub items -->
<rect x="1518" y="944" width="15" height="15" fill="#5a5a5a" stroke="#777"/>
<path d="M1521,951L1524.5,957L1530,945" fill="none" stroke="#ffc000" stroke-width="2.2"/>
<text x="1537" y="955" style="fill:#bdbdbd">Show Sub Items</text>
<!-- props pane -->
<rect x="1659" y="108" width="261" height="855" fill="#676767"/>
<rect x="1661" y="108" width="25" height="26" fill="#777"/>
<g transform="translate(1674,121)"><circle cx="1" cy="-2" r="5" fill="none" stroke="#111" stroke-width="1.8"/><path d="M-2.5,2L-7,7" stroke="#111" stroke-width="2.2"/><path d="M5,7h6l-3,3z" fill="#222"/></g>
<rect x="1687" y="110" width="228" height="23" fill="#262626"/>
<text x="1692" y="126" style="font-size:11px;fill:#7d7d7d">Enter text to filter by...</text>

<!-- block backgrounds -->
<g fill="#2a2a2a">
<rect x="1660" y="136" width="255" height="38"/><rect x="1660" y="176" width="255" height="38"/><rect x="1660" y="216" width="255" height="38"/><rect x="1660" y="256" width="255" height="38"/><rect x="1660" y="296" width="255" height="38"/><rect x="1660" y="336" width="255" height="38"/><rect x="1660" y="376" width="255" height="38"/><rect x="1660" y="416" width="255" height="38"/><rect x="1660" y="456" width="255" height="38"/><rect x="1660" y="496" width="255" height="38"/><rect x="1660" y="536" width="255" height="38"/><rect x="1660" y="576" width="255" height="38"/><rect x="1660" y="616" width="255" height="38"/>
</g>
<g fill="url(#body)">
<rect x="1661" y="152" width="253" height="20"/><rect x="1661" y="192" width="253" height="20"/><rect x="1661" y="232" width="253" height="20"/><rect x="1661" y="272" width="253" height="20"/><rect x="1661" y="312" width="253" height="20"/><rect x="1661" y="352" width="253" height="20"/><rect x="1661" y="392" width="253" height="20"/><rect x="1661" y="432" width="253" height="20"/><rect x="1661" y="472" width="253" height="20"/><rect x="1661" y="512" width="253" height="20"/><rect x="1661" y="552" width="253" height="20"/><rect x="1661" y="592" width="253" height="20"/><rect x="1661" y="632" width="253" height="20"/>
</g>
<rect x="1659.5" y="455.5" width="257" height="39" fill="none" stroke="#c9a93a" stroke-width="1.2"/>
<!-- titles -->
<text class="t" x="1686" y="147">Illumination</text>
<text class="t" x="1686" y="187">Color</text>
<text class="t" x="1686" y="227">Intensity</text>
<text class="t" x="1686" y="267">Photometric Mode</text>
<text class="t" x="1686" y="307">Spread Angle</text>
<text class="t" x="1686" y="347">Beam Exponent</text>
<text class="t" x="1686" y="387">Light Geometry</text>
<text class="t" x="1686" y="427">Height (Diameter)</text>
<text class="t" x="1686" y="467">Width</text>
<text class="t" x="1686" y="507">Two Sided</text>
<text class="t" x="1686" y="547">Render Emitter</text>
<text class="t" x="1686" y="587">Luminous Flux (Lumen)</text>
<text class="t" x="1686" y="627">Temperature (K)</text>
<!-- gears -->
<use href="#gear" x="1908" y="144"/><use href="#gear" x="1908" y="184"/><use href="#gear" x="1908" y="224"/><use href="#gear" x="1908" y="264"/><use href="#gear" x="1908" y="304"/><use href="#gear" x="1908" y="344"/><use href="#gear" x="1908" y="384"/><use href="#gear" x="1908" y="424"/><use href="#gear" x="1908" y="464"/><use href="#gear" x="1908" y="504"/><use href="#gear" x="1908" y="544"/><use href="#gear" x="1908" y="584"/><use href="#gear" x="1908" y="624"/>
<!-- selects -->
<rect x="1686" y="152" width="228" height="19" fill="url(#sel)"/>
<text x="1692" y="165" style="fill:#b4b4b4">On</text><use href="#dn" x="1902" y="161"/>
<rect x="1686" y="392" width="228" height="19" fill="url(#sel)"/>
<text x="1692" y="405" style="fill:#b4b4b4">Point</text><use href="#dn" x="1902" y="401"/>
<!-- colour -->
<rect x="1687" y="192" width="226" height="19" fill="#fff"/>
<g style="text-anchor:middle"><text x="1724" y="206" style="fill:#111;font-size:11px">255</text><text x="1800" y="206" style="fill:#111;font-size:11px">255</text><text x="1876" y="206" style="fill:#111;font-size:11px">255</text></g>
<!-- sliders -->
<use href="#sl" y="241"/><use href="#sl" y="321"/><use href="#sl" y="361"/><use href="#sl" y="441"/><use href="#sl" y="481"/><use href="#sl" y="601"/><use href="#sl" y="641"/>
<g fill="#262626"><ellipse cx="1780" cy="241" rx="4.6" ry="7"/><ellipse cx="1727" cy="321" rx="4.6" ry="7"/><ellipse cx="1705" cy="361" rx="4.6" ry="7"/><ellipse cx="1781" cy="441" rx="5" ry="6.5"/><ellipse cx="1781" cy="481" rx="5" ry="6.5"/><ellipse cx="1781" cy="601" rx="5" ry="6.5"/><ellipse cx="1859" cy="641" rx="5" ry="7"/></g>
<text class="v" x="1912" y="246" style="fill:#a0a0a0">100.0%</text>
<text class="v" x="1907" y="326" style="fill:#c4c4c4">30.00</text>
<text class="v" x="1907" y="366" style="fill:#a0a0a0">4.00</text>
<text class="v" x="1907" y="446" style="fill:#a0a0a0">10.00</text>
<text class="v" x="1907" y="486" style="fill:#a0a0a0">10.00</text>
<text class="v" x="1913" y="606" style="fill:#c8c8c8">3000.00</text>
<text class="v" x="1911" y="646" style="fill:#c8c8c8">1000...</text>
<!-- toggles -->
<rect x="1777" y="273" width="46" height="19" fill="#555"/><text x="1800" y="286" style="text-anchor:middle;fill:#cfcfcf;font-size:11px">On</text>
<rect x="1777" y="513" width="46" height="19" fill="url(#sel)"/><text x="1800" y="527" style="text-anchor:middle;fill:#cfcfcf;font-size:11px">Off</text>
<rect x="1777" y="553" width="46" height="19" fill="#555"/><text x="1800" y="567" style="text-anchor:middle;fill:#cfcfcf;font-size:11px">On</text>
<!-- bottom of right panel -->
<rect x="1512" y="963" width="408" height="3" fill="#3a3a3a"/>
<rect x="1512" y="966" width="408" height="7" fill="#444"/>
<path d="M1708,967h12v6h-12zM1708,970h12" fill="none" stroke="#777"/>
<rect x="1513" y="976" width="403" height="17" fill="url(#sel)"/>
<rect x="1513" y="976" width="44" height="17" fill="#6d6d6d"/>
<text x="1535" y="988" style="text-anchor:middle;fill:#c4c4c4">Tips</text>
<!-- bottom bar -->
<rect y="995" width="1920" height="4" fill="#666"/>
<rect x="934" y="995" width="50" height="4" fill="#7d7d7d"/>
</svg>
</body></html>
